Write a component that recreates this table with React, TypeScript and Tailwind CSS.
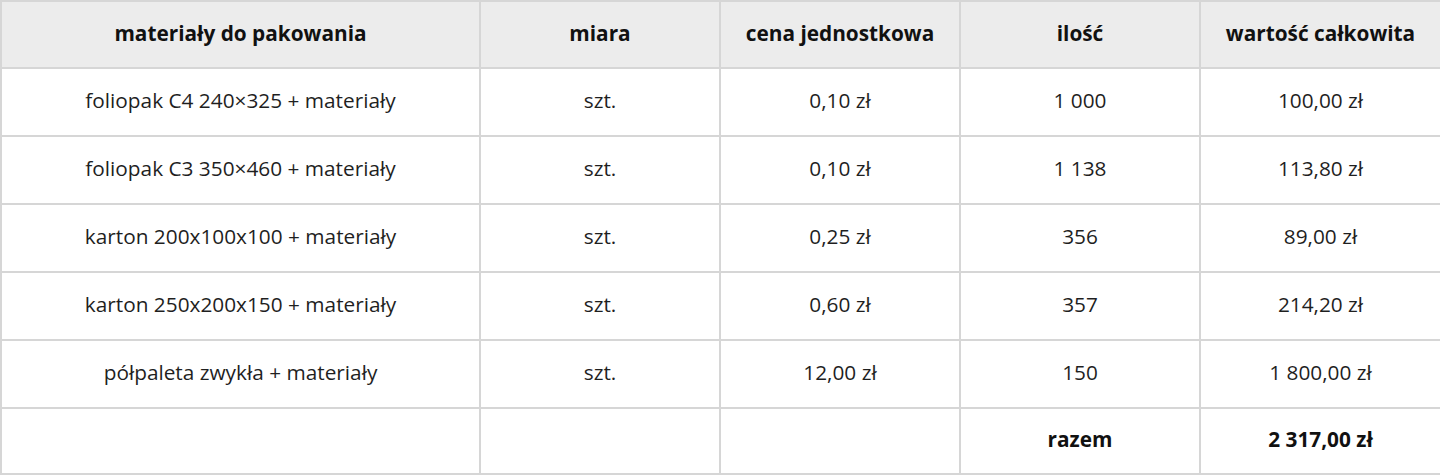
import React from "react";

const rows = [
  ["foliopak C4 240×325 + materiały", "szt.", "0,10 zł", "1 000", "100,00 zł"],
  ["foliopak C3 350×460 + materiały", "szt.", "0,10 zł", "1 138", "113,80 zł"],
  ["karton 200x100x100 + materiały", "szt.", "0,25 zł", "356", "89,00 zł"],
  ["karton 250x200x150 + materiały", "szt.", "0,60 zł", "357", "214,20 zł"],
  ["półpaleta zwykła + materiały", "szt.", "12,00 zł", "150", "1 800,00 zł"],
];

const cell = "p-0 border-2 border-[#d6d6d6] text-center align-middle pb-[2px]";

export default function App() {
  return (
    <div className="w-[1440px] h-[476px] bg-white overflow-hidden" style={{ fontFamily: '"Open Sans", "Noto Sans", sans-serif' }}>
      <table className="w-[1440px] table-fixed border-collapse text-[20.8px] text-[#1f1f1f]">
        <colgroup>
          <col className="w-[479px]" />
          <col className="w-[240px]" />
          <col className="w-[240px]" />
          <col className="w-[240px]" />
          <col className="w-[241px]" />
        </colgroup>
        <thead>
          <tr className="bg-[#ececec]">
            {["materiały do pakowania", "miara", "cena jednostkowa", "ilość", "wartość całkowita"].map((h) => (
              <th key={h} className={`h-[67px] font-bold text-[#111] ${cell}`}>
                {h}
              </th>
            ))}
          </tr>
        </thead>
        <tbody>
          {rows.map((r, i) => (
            <tr key={i}>
              {r.map((c, j) => (
                <td key={j} className={`h-[68px] ${cell}`}>
                  {c}
                </td>
              ))}
            </tr>
          ))}
          <tr>
            <td className={`h-[66px] ${cell}`}></td>
            <td className={`h-[66px] ${cell}`}></td>
            <td className={`h-[66px] ${cell}`}></td>
            <td className={`h-[66px] font-bold text-[#111] ${cell}`}>razem</td>
            <td className={`h-[66px] font-bold text-[#111] ${cell}`}>2 317,00 zł</td>
          </tr>
        </tbody>
      </table>
    </div>
  );
}
